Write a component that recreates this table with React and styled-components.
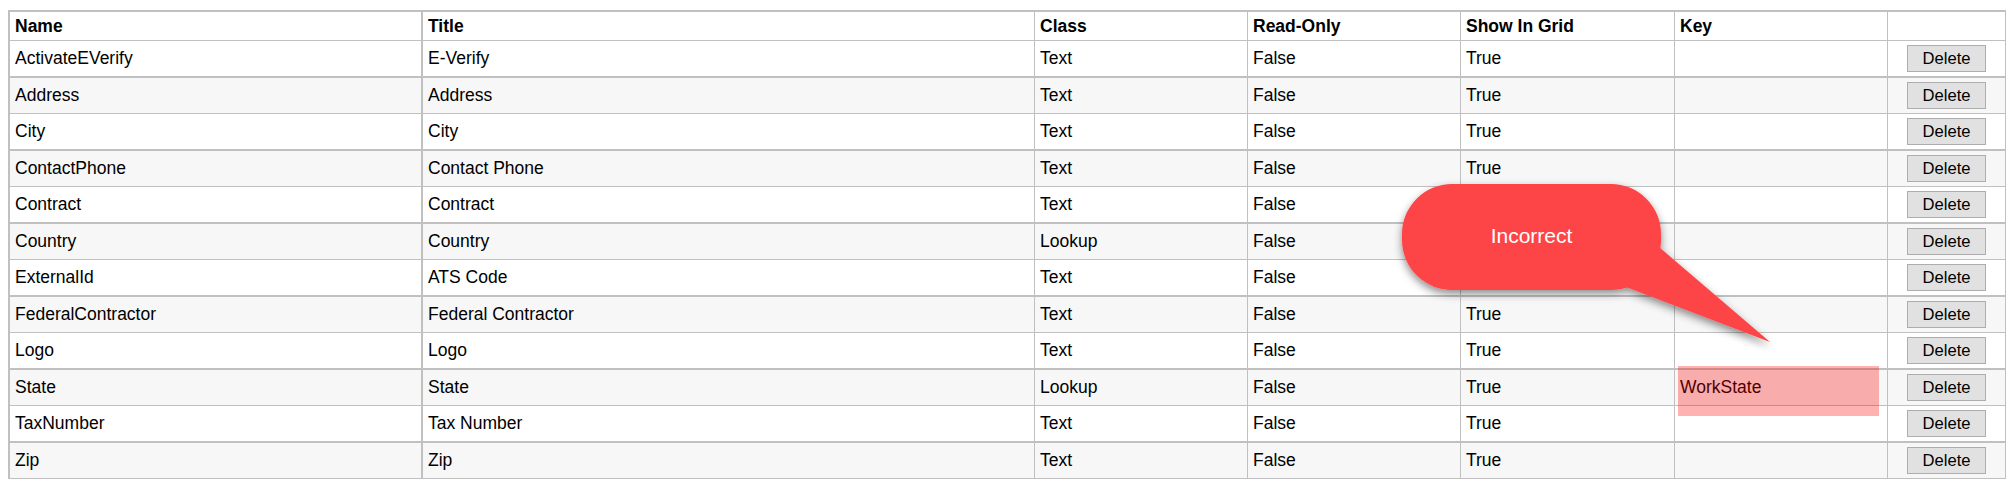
import React from 'react'
import styled, { createGlobalStyle } from 'styled-components'

const rows = [
  ['ActivateEVerify', 'E-Verify', 'Text', 'False', 'True', ''],
  ['Address', 'Address', 'Text', 'False', 'True', ''],
  ['City', 'City', 'Text', 'False', 'True', ''],
  ['ContactPhone', 'Contact Phone', 'Text', 'False', 'True', ''],
  ['Contract', 'Contract', 'Text', 'False', 'True', ''],
  ['Country', 'Country', 'Lookup', 'False', 'True', ''],
  ['ExternalId', 'ATS Code', 'Text', 'False', 'True', ''],
  ['FederalContractor', 'Federal Contractor', 'Text', 'False', 'True', ''],
  ['Logo', 'Logo', 'Text', 'False', 'True', ''],
  ['State', 'State', 'Lookup', 'False', 'True', 'WorkState'],
  ['TaxNumber', 'Tax Number', 'Text', 'False', 'True', ''],
  ['Zip', 'Zip', 'Text', 'False', 'True', ''],
]

const columns = [
  { label: 'Name', width: 413 },
  { label: 'Title', width: 612 },
  { label: 'Class', width: 213 },
  { label: 'Read-Only', width: 213 },
  { label: 'Show In Grid', width: 214 },
  { label: 'Key', width: 213 },
  { label: '', width: 118 },
]

const App = () => (
  <Page>
    <GlobalStyle />
    <Grid>
      <thead>
        <tr>
          {columns.map(col => (
            <Th key={col.label} $width={col.width}>{col.label}</Th>
          ))}
        </tr>
      </thead>
      <tbody>
        {rows.map(row => (
          <Row key={row[0]}>
            {row.map((value, i) => <Td key={i}>{value}</Td>)}
            <ActionCell>
              <DeleteButton type="button">Delete</DeleteButton>
            </ActionCell>
          </Row>
        ))}
      </tbody>
    </Grid>

    <Callout>
      <svg width="400" height="190" viewBox="0 0 400 190">
        <defs>
          <filter id="shade" x="-10%" y="-10%" width="130%" height="140%">
            <feDropShadow dx="0" dy="4" stdDeviation="4" floodColor="#000" floodOpacity="0.45" />
          </filter>
        </defs>
        <g fill="#fd4447" filter="url(#shade)">
          <rect x="12" y="9" width="259" height="106" rx="50" ry="50" />
          <polygon points="262,66 380,167 236,112" />
        </g>
      </svg>
      <CalloutLabel>Incorrect</CalloutLabel>
    </Callout>

    <Highlight />
  </Page>
)

const GlobalStyle = createGlobalStyle`
  body {
    margin: 0;
    overflow: hidden;
    background: #fff;
    font-family: "Liberation Sans", Arial, sans-serif;
  }
`

const Page = styled.div`
  position: relative;
  width: 2009px;
  height: 492px;
  padding: 10px 0 0 8px;
  box-sizing: border-box;
`

const Grid = styled.table`
  width: 1998px;
  table-layout: fixed;
  border-collapse: separate;
  border-spacing: 0;
  border-top: 2px solid #c0c0c0;
  border-left: 2px solid #c0c0c0;
  color: #000;
  font-size: 17.5px;

  th, td {
    box-sizing: border-box;
    padding: 0 5px;
    border-right: 1px solid #c0c0c0;
    border-bottom: 1px solid #c0c0c0;
    text-align: left;
    vertical-align: middle;
    white-space: nowrap;
  }

  th:first-child, td:first-child {
    border-right-width: 2px;
  }
`

const Th = styled.th`
  width: ${p => p.$width}px;
  height: 29px;
  font-weight: bold;
`

const Row = styled.tr`
  td {
    height: 36px;
  }

  &:nth-child(odd) td {
    height: 37px;
    border-bottom-width: 2px;
  }

  &:nth-child(even) {
    background: #f7f7f7;
  }
`

const Td = styled.td``

const ActionCell = styled.td`
  && {
    text-align: center;
    padding: 0;
  }
`

const DeleteButton = styled.button`
  width: 79px;
  height: 27px;
  padding: 0;
  background: #e1e1e1;
  border: 1px solid #adadad;
  border-radius: 0;
  color: #000;
  font-family: "Liberation Sans", Arial, sans-serif;
  font-size: 16.6px;
  vertical-align: middle;
`

const Callout = styled.div`
  position: absolute;
  left: 1390px;
  top: 175px;
  width: 400px;
  height: 190px;

  svg {
    display: block;
  }
`

const CalloutLabel = styled.div`
  position: absolute;
  left: 12px;
  top: 8px;
  width: 259px;
  height: 106px;
  display: flex;
  align-items: center;
  justify-content: center;
  color: #fff;
  font-size: 21px;
`

const Highlight = styled.div`
  position: absolute;
  left: 1678px;
  top: 366px;
  width: 201px;
  height: 50px;
  background: rgba(255, 0, 0, 0.3);
`

export default App
